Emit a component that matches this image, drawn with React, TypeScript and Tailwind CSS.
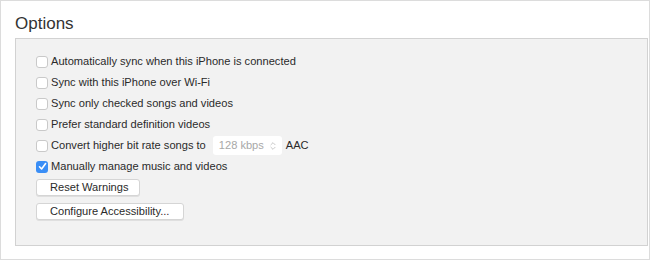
import { ChevronsUpDown } from 'lucide-react';

const rows = [
  { label: 'Automatically sync when this iPhone is connected', checked: false },
  { label: 'Sync with this iPhone over Wi-Fi', checked: false },
  { label: 'Sync only checked songs and videos', checked: false },
  { label: 'Prefer standard definition videos', checked: false },
];

function Box({ checked }: { checked: boolean }) {
  if (checked) {
    return (
      <span className="flex h-[12px] w-[12px] shrink-0 items-center justify-center rounded-[3px] bg-[#3a8ef6]">
        <svg width="9" height="9" viewBox="0 0 9 9" fill="none">
          <path d="M1.5 4.8 L3.6 7 L7.6 1.6" stroke="white" strokeWidth="1.6" strokeLinecap="round" strokeLinejoin="round" />
        </svg>
      </span>
    );
  }
  return <span className="h-[12px] w-[12px] shrink-0 rounded-[3px] border border-[#c9c9c9] bg-white" />;
}

function Row({ label, checked, children }: { label: string; checked: boolean; children?: React.ReactNode }) {
  return (
    <div className="flex h-[21px] items-center gap-[3px] whitespace-nowrap">
      <Box checked={checked} />
      <span>{label}</span>
      {children}
    </div>
  );
}

export default function App() {
  return (
    <div className="h-[260px] w-[650px] border border-[#dcdcdc] bg-white font-['Liberation_Sans',Arial,sans-serif] text-[11.1px] text-[#2a2a2a]">
      <div className="px-[14px] pt-[13px]">
        <h1 className="text-[17px] leading-[20px] text-[#333]">Options</h1>
        <div className="mt-[4px] h-[208px] w-[633px] border border-[#d2d2d2] bg-[#f2f2f2] pl-[20px] pt-[12px]">
          {rows.map(r => (
            <Row key={r.label} label={r.label} checked={r.checked} />
          ))}
          <Row label="Convert higher bit rate songs to" checked={false}>
            <span className="ml-[4px] flex h-[19px] w-[69px] items-center justify-between rounded-[3px] bg-white pl-[6px] pr-[4px] text-[#a8a8a8]">
              128 kbps
              <ChevronsUpDown size={10} strokeWidth={1.5} className="text-[#a8a8a8]" />
            </span>
            <span className="ml-[1px]">AAC</span>
          </Row>
          <Row label="Manually manage music and videos" checked={true} />
          <div className="mt-[2px] flex flex-col items-start gap-[7px]">
            <button className="h-[17px] w-[104px] whitespace-nowrap rounded-[3px] border border-[#d5d5d5] bg-white pl-[13px] text-left leading-[15px] shadow-[0_1px_0_rgba(0,0,0,0.08)]">
              Reset Warnings
            </button>
            <button className="h-[17px] w-[148px] whitespace-nowrap rounded-[3px] border border-[#d5d5d5] bg-white pl-[13px] text-left leading-[15px] shadow-[0_1px_0_rgba(0,0,0,0.08)]">
              Configure Accessibility...
            </button>
          </div>
        </div>
      </div>
    </div>
  );
}
